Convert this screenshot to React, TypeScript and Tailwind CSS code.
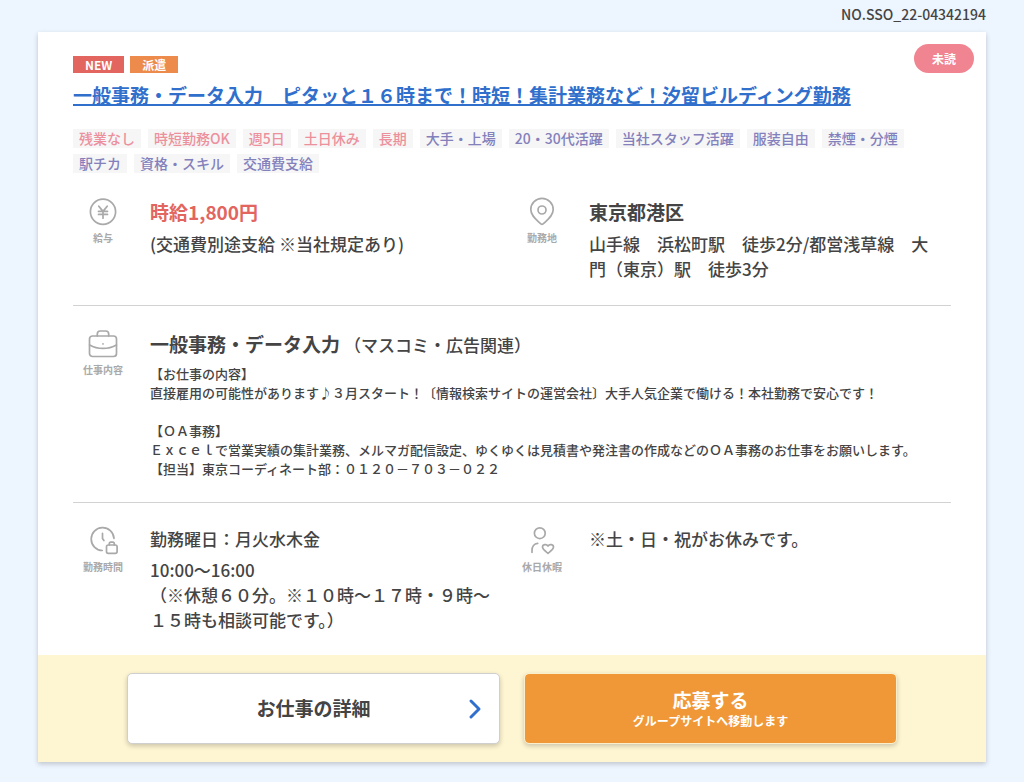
import type { ReactNode } from "react";

const conditionTags = ["残業なし", "時短勤務OK", "週5日", "土日休み", "長期"];

const featureTags = [
  "大手・上場",
  "20・30代活躍",
  "当社スタッフ活躍",
  "服装自由",
  "禁煙・分煙",
  "駅チカ",
  "資格・スキル",
  "交通費支給",
];

const iconProps = {
  width: 30,
  height: 30,
  viewBox: "0 0 30 30",
  fill: "none",
  stroke: "currentColor",
  strokeWidth: 1.7,
  strokeLinecap: "round",
  strokeLinejoin: "round",
  "aria-hidden": true,
} as const;

function YenIcon() {
  return (
    <svg {...iconProps}>
      <circle cx="15" cy="14.7" r="12.6" />
      <path d="M10.800 9.200 15 14.400l4.200-5.200M15 14.400v6.800M10.500 14.400h9M10.500 17.400h9" />
    </svg>
  );
}

function PinIcon() {
  return (
    <svg {...iconProps}>
      <path d="M15 27.300c-.8 0-1.300-.4-2-1.100C8.500 22 3.800 18.400 3.800 12.600a11.200 11.200 0 0 1 22.400 0c0 5.800-4.700 9.400-9.200 13.600-.7.700-1.200 1.100-2 1.100Z" />
      <circle cx="15" cy="13" r="4" />
    </svg>
  );
}

function BriefcaseIcon() {
  return (
    <svg {...iconProps}>
      <rect x="1.500" y="7" width="27" height="20.500" rx="3" />
      <path d="M9.300 6.800V5a3 3 0 0 1 3-3h5.400a3 3 0 0 1 3 3v1.800M1.600 16c8 4.600 18.800 4.600 26.800 0M15 14.800v.2" />
    </svg>
  );
}

function ClockIcon() {
  return (
    <svg {...iconProps}>
      <path d="M14.300 24.500A11.400 11.400 0 1 1 26 12.400M14.500 7.300v5.200l1.400 2" />
      <rect x="18.500" y="19" width="10.600" height="8.400" rx="1.800" />
      <path d="M21.300 18.800v-1.300a1.300 1.300 0 0 1 1.300-1.300h2.400a1.300 1.300 0 0 1 1.300 1.300v1.300" />
    </svg>
  );
}

function HolidayIcon() {
  return (
    <svg {...iconProps}>
      <circle cx="12.800" cy="7.200" r="5.400" />
      <path d="M5 26.300v-1.700c0-4 2.200-7 5.700-7.300" />
      <path d="M21 27.300c-1.900-1.600-5.500-3.800-5.500-6.200 0-2.600 3.900-3.500 5.500-1.100 1.600-2.400 5.500-1.500 5.500 1.100 0 2.400-3.600 4.600-5.500 6.200Z" />
    </svg>
  );
}

function InfoItem({ icon, label, children }: { icon: ReactNode; label: string; children: ReactNode }) {
  return (
    <div className="flex gap-[17px]">
      <div className="flex w-[60px] shrink-0 flex-col items-center text-[#a9a9a9]">
        {icon}
        <p className="mt-1 text-[10px] leading-[14px] font-bold">{label}</p>
      </div>
      <div className="min-w-0 flex-1 text-[17px] leading-[25px]">{children}</div>
    </div>
  );
}

function TagItem({ className, children }: { className: string; children: ReactNode }) {
  return <li className={`bg-[#f6f6f7] px-[6px] text-[14px] leading-[19px] ${className}`}>{children}</li>;
}

export default function App() {
  return (
    <main
      lang="ja"
      className="min-h-screen bg-[#edf5fe] px-[38px] pt-1 pb-5 font-['Noto_Sans_CJK_JP',sans-serif] font-medium text-[#444444]"
    >
      <p className="pb-2 text-right text-[14px] leading-5">NO.SSO_22-04342194</p>

      <article className="bg-white shadow-[0_2px_5px_rgba(0,0,0,0.2)]">
        <div className="relative px-[35px] pt-6 pb-[23px]">
          <span className="absolute top-3 right-3 rounded-full bg-[#f08491] px-[18px] py-1 text-[12px] leading-[21px] font-bold text-white">
            未読
          </span>

          <div className="flex gap-[6px] text-[12px] leading-[17px] font-bold text-white">
            <span className="bg-[#e2655f] px-3">NEW</span>
            <span className="bg-[#ec8b4b] px-3">派遣</span>
          </div>

          <h1 className="mt-2 text-[19px] leading-7 font-bold">
            <a
              href="#detail"
              className="text-[#306fcc] underline decoration-2 underline-offset-1 [text-decoration-skip-ink:none]"
            >
              一般事務・データ入力　ピタッと１６時まで！時短！集計業務など！汐留ビルディング勤務
            </a>
          </h1>

          <ul className="mt-5 flex flex-wrap gap-x-[7px] gap-y-[6px]">
            {conditionTags.map((tag) => (
              <TagItem key={tag} className="text-[#ec919c]">
                {tag}
              </TagItem>
            ))}
            {featureTags.map((tag) => (
              <TagItem key={tag} className="text-[#8380bb]">
                {tag}
              </TagItem>
            ))}
          </ul>

          <section className="grid grid-cols-2 border-b border-[#d2d2d2] py-6">
            <InfoItem icon={<YenIcon />} label="給与">
              <p className="text-[19px] leading-[30px] font-bold text-[#e2655f]">時給1,800円</p>
              <p className="mt-1">(交通費別途支給 ※当社規定あり)</p>
            </InfoItem>
            <InfoItem icon={<PinIcon />} label="勤務地">
              <p className="text-[19px] leading-[30px] font-bold">東京都港区</p>
              <p className="mt-1 pr-4">山手線　浜松町駅　徒歩2分/都営浅草線　大門（東京）駅　徒歩3分</p>
            </InfoItem>
          </section>

          <section className="border-b border-[#d2d2d2] pt-[23px] pb-6">
            <InfoItem icon={<BriefcaseIcon />} label="仕事内容">
              <h2 className="leading-[30px]">
                <span className="text-[19px] font-bold">一般事務・データ入力</span>
                <span className="ml-1">（マスコミ・広告関連）</span>
              </h2>
              <div className="mt-1 text-[13px] leading-[19px]">
                <p>【お仕事の内容】</p>
                <p>
                  直接雇用の可能性があります♪３月スタート！〔情報検索サイトの運営会社〕大手人気企業で働ける！本社勤務で安心です！
                </p>
                <br />
                <p>【ＯＡ事務】</p>
                <p>
                  Ｅｘｃｅｌで営業実績の集計業務、メルマガ配信設定、ゆくゆくは見積書や発注書の作成などのＯＡ事務のお仕事をお願いします。
                </p>
                <p>【担当】東京コーディネート部：０１２０－７０３－０２２</p>
              </div>
            </InfoItem>
          </section>

          <section className="grid grid-cols-2 pt-[23px]">
            <InfoItem icon={<ClockIcon />} label="勤務時間">
              <p>勤務曜日：月火水木金</p>
              <p className="mt-[6px] pr-4">
                10:00〜16:00
                <br />
                （※休憩６０分。※１０時〜１７時・９時〜１５時も相談可能です。）
              </p>
            </InfoItem>
            <InfoItem icon={<HolidayIcon />} label="休日休暇">
              <p>※土・日・祝がお休みです。</p>
            </InfoItem>
          </section>
        </div>

        <footer className="bg-[#fef5d2] py-[18px]">
          <div className="mx-auto grid max-w-[770px] grid-cols-2 gap-6 text-center font-bold">
            <a
              id="detail"
              href="#detail"
              className="relative flex min-h-[71px] items-center justify-center rounded-[5px] border border-[#cfcfcf] bg-white text-[19px] shadow-[0_2px_5px_rgba(0,0,0,0.2)]"
            >
              お仕事の詳細
              <svg
                className="absolute right-[17px]"
                width="14"
                height="22"
                viewBox="0 0 14 22"
                fill="none"
                stroke="#306fcc"
                strokeWidth="3"
                strokeLinecap="round"
                strokeLinejoin="round"
                aria-hidden="true"
              >
                <path d="m3 3 8 8-8 8" />
              </svg>
            </a>
            <button
              type="button"
              className="flex flex-col items-center justify-center rounded-[5px] border border-[#fbeecb] bg-[#f09837] bg-clip-padding text-white shadow-[0_2px_5px_rgba(0,0,0,0.2)]"
            >
              <span className="text-[19px] leading-6">応募する</span>
              <span className="text-[12px] leading-[17px]">グループサイトへ移動します</span>
            </button>
          </div>
        </footer>
      </article>
    </main>
  );
}
